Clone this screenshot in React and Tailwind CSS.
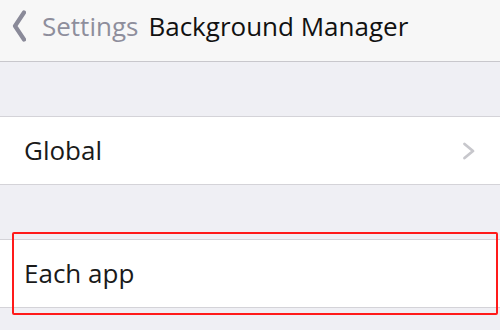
function ChevronLeft() {
  return (
    <svg width="14" height="32" viewBox="0 0 14 32" className="shrink-0">
      <path d="M12 2.5 L3 16 L12 29.5" fill="none" stroke="#8a8a99" strokeWidth="4.2" strokeLinecap="round" strokeLinejoin="round" />
    </svg>
  );
}

function ChevronRight() {
  return (
    <svg width="14" height="18" viewBox="0 0 14 18" className="shrink-0">
      <path d="M2.5 2 L11 9 L2.5 16" fill="none" stroke="#c7c7cc" strokeWidth="2.8" strokeLinecap="round" strokeLinejoin="round" />
    </svg>
  );
}

function Row({label, arrow}) {
  return (
    <div className="flex h-[69px] items-center justify-between border-y border-[#d4d3d8] bg-white pl-6 pr-6">
      <span className="text-[26px] text-[#1a1a1a]">{label}</span>
      {arrow && <ChevronRight />}
    </div>
  );
}

export default function App() {
  return (
    <div
      className="relative h-[330px] w-[500px] overflow-hidden bg-[#efeff4]"
      style={{fontFamily: '"Open Sans", "Noto Sans", sans-serif'}}>
      {/* Nav bar */}
      <div className="flex h-[62px] items-center border-b border-[#c8c7cc] bg-[#f7f7f7] pb-[9px] pl-[12px]">
        <ChevronLeft />
        <span className="ml-[16px] text-[26px] text-[#8e8e9c]">Settings</span>
        <span className="ml-[10px] text-[26px] text-[#111]">Background Manager</span>
      </div>

      <div className="h-[54px]" />
      <Row label="Global" arrow />
      <div className="h-[54px]" />
      <Row label="Each app" />

      {/* highlight */}
      <div className="absolute left-[12px] top-[232px] h-[83px] w-[486px] rounded-[2px] border-2 border-[#ff1a1a]" />
    </div>
  );
}
